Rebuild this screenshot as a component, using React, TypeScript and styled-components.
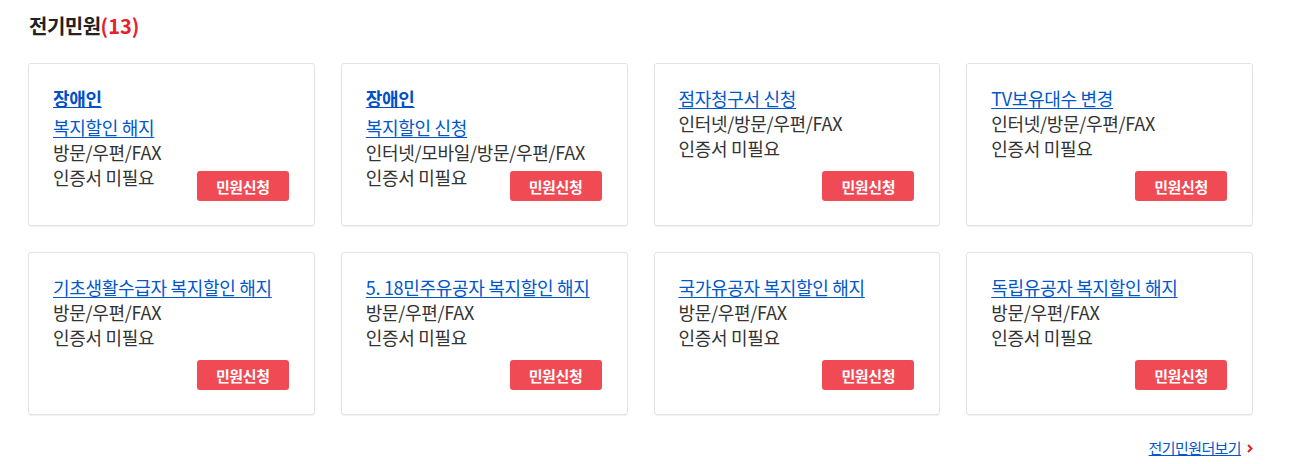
import styled, { createGlobalStyle } from "styled-components";

const GlobalStyle = createGlobalStyle`
  body {
    margin: 0;
    background: #fff;
    font-family: "Noto Sans CJK KR", "Noto Sans", sans-serif;
    color: #333;
  }
`;

const Section = styled.section`
  width: 1225px;
  margin-left: 28px;
  padding-top: 12px;
`;

const Heading = styled.h2`
  margin: 0 0 23px 1px;
  font-size: 20px;
  line-height: 28px;
  font-weight: 700;
  color: #222;
  letter-spacing: -0.5px;
`;

const Count = styled.span`
  color: #e8202a;
  letter-spacing: 0;
`;

const Grid = styled.div`
  display: grid;
  grid-template-columns: repeat(4, 1fr);
  gap: 26px 26px;
`;

const Card = styled.div`
  position: relative;
  height: 163px;
  box-sizing: border-box;
  padding: 22px 24px 0 24px;
  border: 1px solid #e2e2e2;
  border-radius: 3px;
  box-shadow: 0 1px 1px rgba(0, 0, 0, 0.06);
  font-size: 18px;
  line-height: 25px;
  letter-spacing: -0.3px;
`;

const Category = styled.a`
  display: block;
  margin-bottom: 4px;
  color: #0050c8;
  font-weight: 700;
  text-decoration: underline;
`;

const ServiceLink = styled.a`
  display: block;
  color: #0057cc;
  text-decoration: underline;
  text-underline-offset: 2px;
`;

const Line = styled.div`
  color: #333;
`;

const ApplyButton = styled.button`
  position: absolute;
  right: 25px;
  bottom: 24px;
  width: 92px;
  height: 30px;
  border: 0;
  border-radius: 3px;
  background: #f04b55;
  color: #fff;
  font-family: inherit;
  font-size: 15px;
  font-weight: 700;
  letter-spacing: -0.4px;
  cursor: pointer;
`;

const Footer = styled.div`
  display: flex;
  justify-content: flex-end;
  align-items: center;
  margin-top: 23px;
`;

const MoreLink = styled.a`
  display: flex;
  align-items: center;
  gap: 6px;
  font-size: 15px;
  line-height: 20px;
  color: #0057cc;
  text-decoration: underline;
  letter-spacing: -0.6px;
`;

const Chevron = styled.svg`
  width: 6px;
  height: 9px;
`;

interface Service {
  category?: string;
  title: string;
  channels: string;
}

const services: Service[] = [
  { category: "장애인", title: "복지할인 해지", channels: "방문/우편/FAX" },
  { category: "장애인", title: "복지할인 신청", channels: "인터넷/모바일/방문/우편/FAX" },
  { title: "점자청구서 신청", channels: "인터넷/방문/우편/FAX" },
  { title: "TV보유대수 변경", channels: "인터넷/방문/우편/FAX" },
  { title: "기초생활수급자 복지할인 해지", channels: "방문/우편/FAX" },
  { title: "5. 18민주유공자 복지할인 해지", channels: "방문/우편/FAX" },
  { title: "국가유공자 복지할인 해지", channels: "방문/우편/FAX" },
  { title: "독립유공자 복지할인 해지", channels: "방문/우편/FAX" },
];

export default function App() {
  return (
    <>
      <GlobalStyle />
      <Section>
        <Heading>
          전기민원<Count>(13)</Count>
        </Heading>
        <Grid>
          {services.map((s, i) => (
            <Card key={i}>
              {s.category && <Category href="#">{s.category}</Category>}
              <ServiceLink href="#">{s.title}</ServiceLink>
              <Line>{s.channels}</Line>
              <Line>인증서 미필요</Line>
              <ApplyButton>민원신청</ApplyButton>
            </Card>
          ))}
        </Grid>
        <Footer>
          <MoreLink href="#">
            전기민원더보기
            <Chevron viewBox="0 0 6 9">
              <path d="M1 1l3.5 3.5L1 8" fill="none" stroke="#e8202a" strokeWidth="2" />
            </Chevron>
          </MoreLink>
        </Footer>
      </Section>
    </>
  );
}
